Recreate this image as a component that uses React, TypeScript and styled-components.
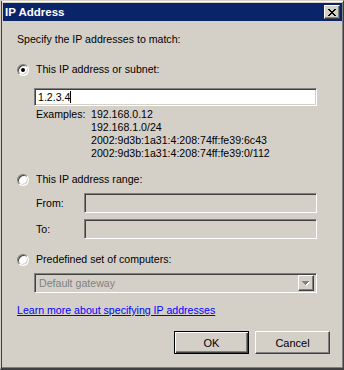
import styled, { createGlobalStyle, css } from 'styled-components';

const GlobalStyle = createGlobalStyle`
  html, body {
    margin: 0;
    padding: 0;
    background: #d4d0c8;
  }
  body {
    font-family: 'Liberation Sans', Arial, sans-serif;
    font-size: 10.6px;
    color: #000;
  }
`;

const sunken = css`
  box-sizing: border-box;
  border: 1px solid;
  border-color: #808080 #fff #fff #808080;
  box-shadow: inset 1px 1px #404040, inset -1px -1px #d4d0c8;
`;

const raised = css`
  box-sizing: border-box;
  border: 1px solid;
  border-color: #fff #404040 #404040 #fff;
  box-shadow: inset -1px -1px #808080, inset 1px 1px #d4d0c8;
`;

const Window = styled.div`
  box-sizing: border-box;
  width: 344px;
  height: 370px;
  background: #d4d0c8;
  border-style: solid;
  border-width: 1px 1px 2px 1px;
  border-color: #d4d0c8 #404040 #404040 #d4d0c8;
  box-shadow: inset 1px 0 #404040, inset 0 1px #fff, inset -1px -1px #808080;
  padding: 2px 1px 0 2px;
  display: flex;
  flex-direction: column;
`;

const TitleBar = styled.div`
  height: 18px;
  background: #0a246a;
  color: #fff;
  display: flex;
  align-items: center;
  justify-content: space-between;
  padding: 0 2px;
`;

const Title = styled.span`
  font-weight: bold;
  font-size: 11.5px;
  line-height: 13px;
`;

const CloseButton = styled.div`
  ${raised};
  width: 16px;
  height: 14px;
  background: #d4d0c8;
  display: flex;
  align-items: center;
  justify-content: center;
  box-shadow: inset -1px -1px #808080;
`;

const Body = styled.div`
  display: flex;
  flex-direction: column;
  padding: 0 12px 0 14px;
`;

const Text = styled.div<{ $top?: number }>`
  line-height: 13px;
  margin-top: ${(p) => p.$top ?? 0}px;
  white-space: nowrap;
`;

const RadioRow = styled.label<{ $top: number }>`
  display: flex;
  align-items: center;
  gap: 7px;
  height: 13px;
  line-height: 13px;
  margin-top: ${(p) => p.$top}px;
`;

const Radio = styled.span<{ $checked?: boolean }>`
  position: relative;
  width: 12px;
  height: 12px;
  box-sizing: border-box;
  border-radius: 50%;
  background: #fff;
  border: 1px solid;
  border-color: #808080 #fff #fff #808080;
  box-shadow: inset 1px 1px #404040, inset -1px -1px #d4d0c8;

  &::after {
    content: '';
    display: ${(p) => (p.$checked ? 'block' : 'none')};
    position: absolute;
    left: 3px;
    top: 3px;
    width: 4px;
    height: 4px;
    border-radius: 50%;
    background: #000;
  }
`;

const Indent = styled.div<{ $top: number }>`
  margin: ${(p) => p.$top}px 13px 0 17px;
`;

const TextBox = styled.div<{ $disabled?: boolean; $height?: number }>`
  ${sunken};
  height: ${(p) => p.$height ?? 20}px;
  background: ${(p) => (p.$disabled ? '#d4d0c8' : '#fff')};
  display: flex;
  align-items: center;
  padding: 0 2px 0 3px;
  line-height: 13px;
`;

const Caret = styled.span`
  display: inline-block;
  width: 1px;
  height: 12px;
  background: #000;
`;

const Examples = styled.div`
  display: grid;
  grid-template-columns: 55px auto;
  padding-left: 2px;
  line-height: 13px;
`;

const ExampleList = styled.div`
  display: flex;
  flex-direction: column;
`;

const FieldRow = styled.div<{ $top: number }>`
  display: grid;
  grid-template-columns: 48px 1fr;
  align-items: center;
  padding-left: 2px;
  margin-top: ${(p) => p.$top}px;
`;

const Select = styled.div`
  ${sunken};
  height: 20px;
  background: #d4d0c8;
  display: flex;
  align-items: center;
  justify-content: space-between;
  padding: 2px 2px 2px 4px;
  color: #808080;
`;

const DropButton = styled.div`
  ${raised};
  width: 16px;
  height: 16px;
  display: flex;
  align-items: center;
  justify-content: center;
  background: #d4d0c8;
`;

const Link = styled.a`
  color: #0000ff;
  text-decoration: underline;
  line-height: 13px;
  margin-top: 11px;
  align-self: flex-start;
  white-space: nowrap;
`;

const ButtonRow = styled.div`
  display: flex;
  justify-content: flex-end;
  gap: 6px;
  margin-top: 14px;
`;

const Button = styled.button<{ $default?: boolean }>`
  ${raised};
  width: 75px;
  height: 23px;
  padding: 0;
  background: #d4d0c8;
  color: #000;
  font-family: 'Liberation Sans', Arial, sans-serif;
  font-size: 11px;
  ${(p) =>
    p.$default &&
    css`
      border-color: #000;
      box-shadow: inset 1px 1px #fff, inset -1px -1px #404040, inset -2px -2px #808080;
    `}
`;

function CloseGlyph() {
  const rows = [
    [0, 1, 6, 7],
    [1, 2, 5, 6],
    [2, 3, 4, 5],
    [3, 4],
    [2, 3, 4, 5],
    [1, 2, 5, 6],
    [0, 1, 6, 7],
  ];
  return (
    <svg width="8" height="7" viewBox="0 0 8 7" shapeRendering="crispEdges">
      {rows.map((cols, y) =>
        cols.map((x) => <rect key={`${x}-${y}`} x={x} y={y} width="1" height="1" fill="#000" />),
      )}
    </svg>
  );
}

function ArrowGlyph() {
  return (
    <svg width="8" height="5" viewBox="0 0 8 5" shapeRendering="crispEdges">
      <path d="M1 1h7v1h-1v1h-1v1h-1v1h-1v-1h-1v-1h-1v-1h-1z" fill="#fff" />
      <path d="M0 0h7v1h-1v1h-1v1h-1v1h-1v-1h-1v-1h-1v-1h-1z" fill="#808080" />
    </svg>
  );
}

export default function App() {
  return (
    <>
      <GlobalStyle />
      <Window>
        <TitleBar>
          <Title>IP Address</Title>
          <CloseButton>
            <CloseGlyph />
          </CloseButton>
        </TitleBar>
        <Body>
          <Text $top={12}>Specify the IP addresses to match:</Text>

          <RadioRow $top={17}>
            <Radio $checked />
            This IP address or subnet:
          </RadioRow>
          <Indent $top={12}>
            <TextBox $height={18}>
              1.2.3.4
              <Caret />
            </TextBox>
          </Indent>
          <Indent $top={2}>
            <Examples>
              <span>Examples:</span>
              <ExampleList>
                <span>192.168.0.12</span>
                <span>192.168.1.0/24</span>
                <span>2002:9d3b:1a31:4:208:74ff:fe39:6c43</span>
                <span>2002:9d3b:1a31:4:208:74ff:fe39:0/112</span>
              </ExampleList>
            </Examples>
          </Indent>

          <RadioRow $top={13}>
            <Radio />
            This IP address range:
          </RadioRow>
          <Indent $top={0}>
            <FieldRow $top={7}>
              <span>From:</span>
              <TextBox $disabled />
            </FieldRow>
            <FieldRow $top={6}>
              <span>To:</span>
              <TextBox $disabled />
            </FieldRow>
          </Indent>

          <RadioRow $top={14}>
            <Radio />
            Predefined set of computers:
          </RadioRow>
          <Indent $top={7}>
            <Select>
              <span>Default gateway</span>
              <DropButton>
                <ArrowGlyph />
              </DropButton>
            </Select>
          </Indent>

          <Link href="#">Learn more about specifying IP addresses</Link>

          <ButtonRow>
            <Button $default>OK</Button>
            <Button>Cancel</Button>
          </ButtonRow>
        </Body>
      </Window>
    </>
  );
}
